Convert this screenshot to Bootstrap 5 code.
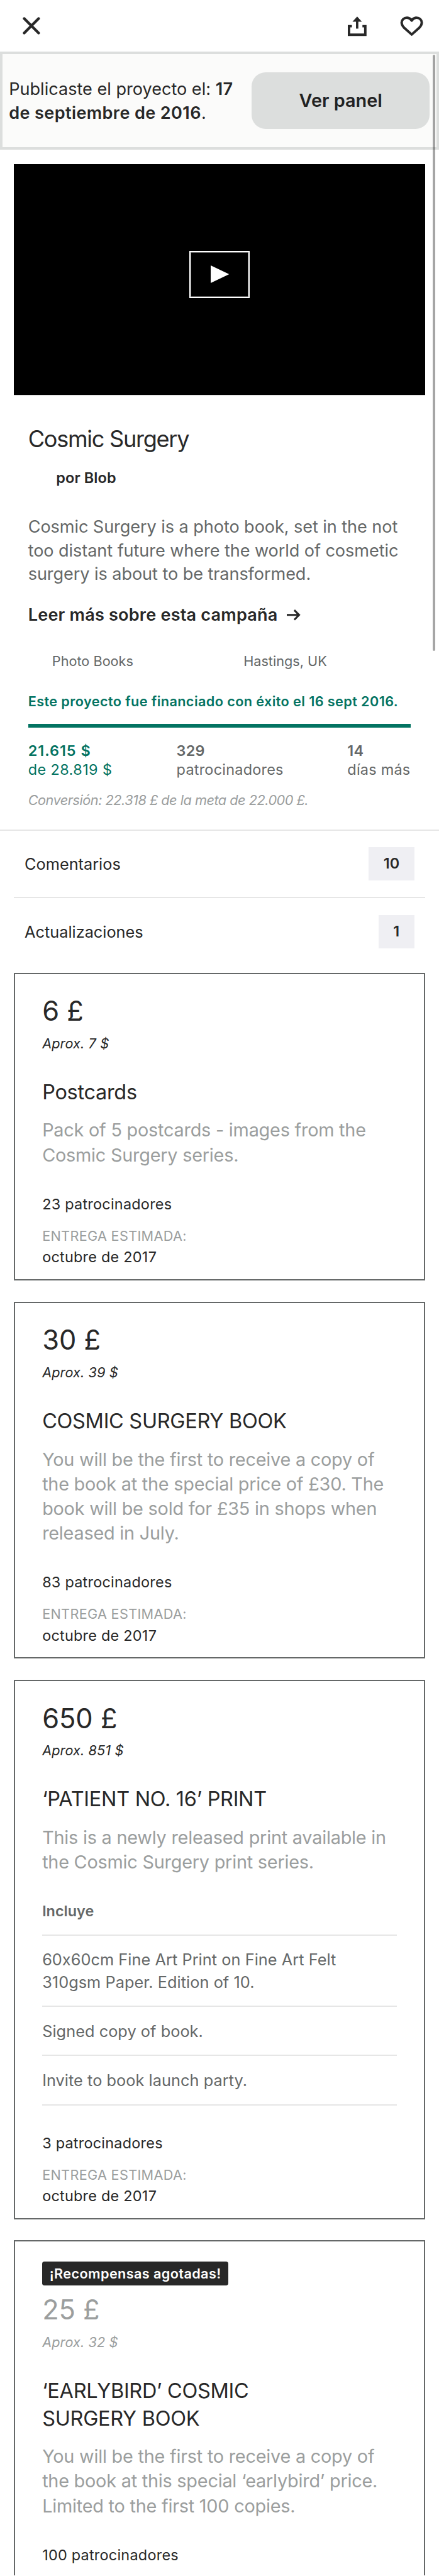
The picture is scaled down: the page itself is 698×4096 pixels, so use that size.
<!DOCTYPE html>
<html lang="es">
<head>
<meta charset="utf-8">
<meta name="viewport" content="width=device-width, initial-scale=1">
<title>Cosmic Surgery</title>
<link href="https://cdn.jsdelivr.net/npm/bootstrap@5.3.0/dist/css/bootstrap.min.css" rel="stylesheet">
<style>
/* 1rem is a tenth of a 75rem-wide screen */
html { font-size: calc(100vw / 75); }
body {
  --ink: #282828; --slate: #656868; --mist: #9b9e9e; --line: #e6e6e6; --fog: #dcdedd; --leaf: #037362;
  /* what a crisp 2px rule takes beyond .2rem */
  --extra: calc(2px - .2rem);
  font-family: Inter, "Liberation Sans", sans-serif; color: var(--ink); background: #fff;
  height: 440rem; overflow: hidden;
}
p, h1, h2, h3, ul { margin: 0; font-weight: 400; }
svg { display: block; }
.ink-slate { color: var(--slate); } .ink-mist { color: var(--mist); } .ink-leaf { color: var(--leaf); }
.t-body { font-size: 2.91rem; line-height: 4rem; }
.t-small { font-size: 2.52rem; line-height: 3.2rem; letter-spacing: .01em; }
.t-note { font-size: 2.33rem; line-height: 3rem; }
.t-row { font-size: 2.72rem; line-height: 3.8rem; }

.topbar { height: 8.8rem; padding: 2.8rem 2.7rem 0 3.9rem; }
.icon-x { width: 3rem; height: 3rem; margin-top: .15rem; }
.icon-share { width: 3.2rem; height: 3.4rem; }
.icon-heart { width: 4rem; height: 3.4rem; margin-left: 5.7rem; }

.banner { height: 16.8rem; border: 4px solid var(--fog); background: #fbfbfa; padding: 0 1.17rem 0 1.1rem; }
.banner p { width: 40rem; padding-top: .12rem; }
.banner strong { font-weight: 600; letter-spacing: .014em; }
.btn.panel-btn { width: 30.4rem; height: 9.6rem; border: 0; border-radius: 2.4rem; background: var(--fog); color: #222; font-size: 3.1rem; font-weight: 600; line-height: 1; padding: .12rem 0 0; }

.player { height: 39.7rem; margin: 2.4rem 2.4rem 0; background: #000; border-bottom: 2px solid var(--line); }
.play-btn { width: 10.4rem; height: 8rem; margin-bottom: 1.7rem; border: 2px solid #fff; outline: 1px solid #666; outline-offset: -3px; padding-left: .2rem; }
.play-btn svg { width: 3.15rem; height: 3rem; }

.summary { padding: 4.93rem 4.8rem calc(3.49rem - var(--extra)); border-bottom: 2px solid var(--line); }
.summary h1 { font-size: 3.88rem; line-height: 4.8rem; letter-spacing: -.035em; }
.author { margin: 2.6rem 0 0 4.8rem; letter-spacing: .004em; font-weight: 600; }
.blurb { margin-top: 4.83rem; letter-spacing: -.0025em; white-space: nowrap; }
.more { margin-top: 2.97rem; font-weight: 600; letter-spacing: .0073em; color: var(--ink); }
.more svg { width: 2.3rem; height: 1.9rem; margin: .1rem 0 0 1.6rem; }
.meta { margin-top: 4.51rem; padding-left: 4.1rem; }
.meta span { flex: 0 0 32.7rem; }
.funded { margin-top: 3.9rem; font-weight: 600; letter-spacing: .018em; white-space: nowrap; }
.progress.goal { height: .6rem; margin-top: 2.25rem; border-radius: 0; }
.goal .progress-bar { background: var(--leaf); }
.stats { margin-top: 2.41rem; }
.stats b { display: block; font-weight: 600; }
.stats > div:nth-child(1) { flex: 0 0 25.35rem; letter-spacing: .0175em; }
.stats > div:nth-child(1) b { letter-spacing: .042em; }
.stats > div:nth-child(2) { flex: 0 0 29.2rem; }
.conversion { margin-top: 2.2rem; font-style: italic; letter-spacing: -.022em; }

.link-list { margin: 0 2.4rem; }
.link-row { height: 11.2rem; padding: 0 1.8rem; }
.link-row + .link-row { height: 11.8rem; border-top: 2px solid var(--line); }
.count { height: 5.6rem; line-height: 5.6rem; padding: 0 2.55rem; background: #efeff3; font-size: 2.52rem; font-weight: 600; }

.reward { margin: 0 2.4rem 3.6rem; border: 2px solid var(--slate); padding: calc(3.52rem - var(--extra)) 4.6rem calc(2.16rem - var(--extra)); }
.reward:first-of-type { margin-top: 1.2rem; }
.reward .price { font-size: 4.66rem; line-height: 5.6rem; }
.reward .approx { font-style: italic; margin-top: 1.36rem; letter-spacing: .005em; }
.reward h3 { font-size: 3.49rem; line-height: 4.7rem; margin-top: 4.43rem; letter-spacing: -.009em; white-space: nowrap; }
.reward .about { font-size: 3.1rem; line-height: 4.2rem; margin-top: 2rem; letter-spacing: -.008em; white-space: nowrap; color: var(--mist); }
.reward .backers { margin-top: 4.74rem; }
.reward .eta { margin-top: 2.43rem; letter-spacing: .014em; color: var(--mist); }
.reward .month { margin-top: .47rem; }
.includes-title { margin-top: 4.75rem; padding-bottom: 2.34rem; font-weight: 600; letter-spacing: 0; }
.includes li { border-top: 2px solid var(--line); padding: 2.22rem 0 calc(2.18rem - var(--extra)); letter-spacing: .002em; }
.includes li:last-child { border-bottom: 2px solid var(--line); }
.reward .includes + .backers { margin-top: 4.83rem; }
.sold-out { display: inline-block; height: 4.05rem; padding: 0 1.25rem; border-radius: .4rem; background: var(--ink); color: #fff; font-size: 2.33rem; line-height: 4.2rem; font-weight: 600; letter-spacing: .0174em; vertical-align: top; margin-bottom: 1.37rem; }
.reward.soldout { padding-top: calc(3.4rem - var(--extra)); margin-bottom: 0; }

.scroll-thumb { top: 9.4rem; right: .6rem; width: .5rem; height: 101.8rem; border-radius: .25rem; background: rgba(0,0,0,.35); }
</style>
</head>
<body class="position-relative">

<header class="topbar d-flex align-items-start">
  <svg class="icon-x" viewBox="0 0 30 30" fill="none" stroke="#282828" stroke-width="4.6" stroke-linecap="round"><path d="M2.7 2.7 27.3 27.3M27.3 2.7 2.7 27.3"/></svg>
  <svg class="icon-share ms-auto" viewBox="0 0 32 34"><path d="M7 16.8H2.1V31.5H29.9V16.8H25" fill="none" stroke="#282828" stroke-width="4.2"/><path d="M16 .4 24 9H18V21H14V9H8Z" fill="#282828"/></svg>
  <svg class="icon-heart" viewBox="0 0 40 34" fill="none" stroke="#282828" stroke-width="4.2" stroke-linejoin="round"><path d="M20 31 7.2 19.6C1.6 14.2 1.8 8.2 5.2 4.9 9.8.6 16.9 1.8 20 7.2 23.1 1.8 30.2.6 34.8 4.9 38.2 8.2 38.4 14.2 32.8 19.6Z"/></svg>
</header>

<section class="banner d-flex align-items-center justify-content-between">
  <p class="t-body">Publicaste el proyecto el: <strong>17<br>de septiembre de 2016</strong>.</p>
  <button type="button" class="btn panel-btn">Ver panel</button>
</section>

<main>
  <div class="player d-flex align-items-center justify-content-center">
    <div class="play-btn d-flex align-items-center justify-content-center">
      <svg viewBox="0 0 31.5 30" preserveAspectRatio="none"><path d="M0 0 31.5 15 0 30Z" fill="#fff"/></svg>
    </div>
  </div>

  <section class="summary">
    <h1>Cosmic Surgery</h1>
    <p class="author t-small">por Blob</p>
    <p class="blurb t-body ink-slate">Cosmic Surgery is a photo book, set in the not<br>too distant future where the world of cosmetic<br>surgery is about to be transformed.</p>
    <a href="#" class="more t-body d-flex align-items-center text-decoration-none">Leer más sobre esta campaña
      <svg viewBox="0 0 23 19" fill="none" stroke="#282828" stroke-width="3.3"><path d="M0 9.5H20.5M12.8 1.3 21 9.5 12.8 17.7"/></svg>
    </a>
    <div class="meta t-note ink-slate d-flex"><span>Photo Books</span><span>Hastings, UK</span></div>
    <p class="funded t-note ink-leaf">Este proyecto fue financiado con éxito el 16 sept 2016.</p>
    <div class="progress goal"><div class="progress-bar w-100"></div></div>
    <div class="stats t-small ink-slate d-flex">
      <div class="ink-leaf"><b>21.615 $</b>de 28.819 $</div>
      <div><b>329</b>patrocinadores</div>
      <div class="text-nowrap"><b>14</b>días más</div>
    </div>
    <p class="conversion t-note ink-mist">Conversión: 22.318 £ de la meta de 22.000 £.</p>
  </section>

  <nav class="link-list">
    <div class="link-row d-flex align-items-center justify-content-between"><span class="t-row">Comentarios</span><span class="count">10</span></div>
    <div class="link-row d-flex align-items-center justify-content-between"><span class="t-row">Actualizaciones</span><span class="count">1</span></div>
  </nav>

  <article class="reward">
    <h2 class="price">6 £</h2>
    <p class="approx t-note">Aprox. 7 $</p>
    <h3>Postcards</h3>
    <p class="about">Pack of 5 postcards - images from the<br>Cosmic Surgery series.</p>
    <p class="backers t-small">23 patrocinadores</p>
    <p class="eta t-note">ENTREGA ESTIMADA:</p>
    <p class="month t-small">octubre de 2017</p>
  </article>

  <article class="reward">
    <h2 class="price">30 £</h2>
    <p class="approx t-note">Aprox. 39 $</p>
    <h3>COSMIC SURGERY BOOK</h3>
    <p class="about">You will be the first to receive a copy of<br>the book at the special price of £30. The<br>book will be sold for £35 in shops when<br>released in July.</p>
    <p class="backers t-small">83 patrocinadores</p>
    <p class="eta t-note">ENTREGA ESTIMADA:</p>
    <p class="month t-small">octubre de 2017</p>
  </article>

  <article class="reward">
    <h2 class="price">650 £</h2>
    <p class="approx t-note">Aprox. 851 $</p>
    <h3>‘PATIENT NO. 16’ PRINT</h3>
    <p class="about">This is a newly released print available in<br>the Cosmic Surgery print series.</p>
    <p class="includes-title t-small ink-slate">Incluye</p>
    <ul class="includes list-unstyled t-row ink-slate">
      <li>60x60cm Fine Art Print on Fine Art Felt<br>310gsm Paper. Edition of 10.</li>
      <li>Signed copy of book.</li>
      <li>Invite to book launch party.</li>
    </ul>
    <p class="backers t-small">3 patrocinadores</p>
    <p class="eta t-note">ENTREGA ESTIMADA:</p>
    <p class="month t-small">octubre de 2017</p>
  </article>

  <article class="reward soldout">
    <span class="sold-out">¡Recompensas agotadas!</span>
    <h2 class="price ink-mist">25 £</h2>
    <p class="approx t-note ink-mist">Aprox. 32 $</p>
    <h3>‘EARLYBIRD’ COSMIC<br>SURGERY BOOK</h3>
    <p class="about">You will be the first to receive a copy of<br>the book at this special ‘earlybird’ price.<br>Limited to the first 100 copies.</p>
    <p class="backers t-small">100 patrocinadores</p>
    <p class="month t-small">&nbsp;</p>
  </article>
</main>

<div class="scroll-thumb position-absolute"></div>
<script src="https://cdn.jsdelivr.net/npm/bootstrap@5.3.0/dist/js/bootstrap.bundle.min.js"></script>
</body>
</html>
